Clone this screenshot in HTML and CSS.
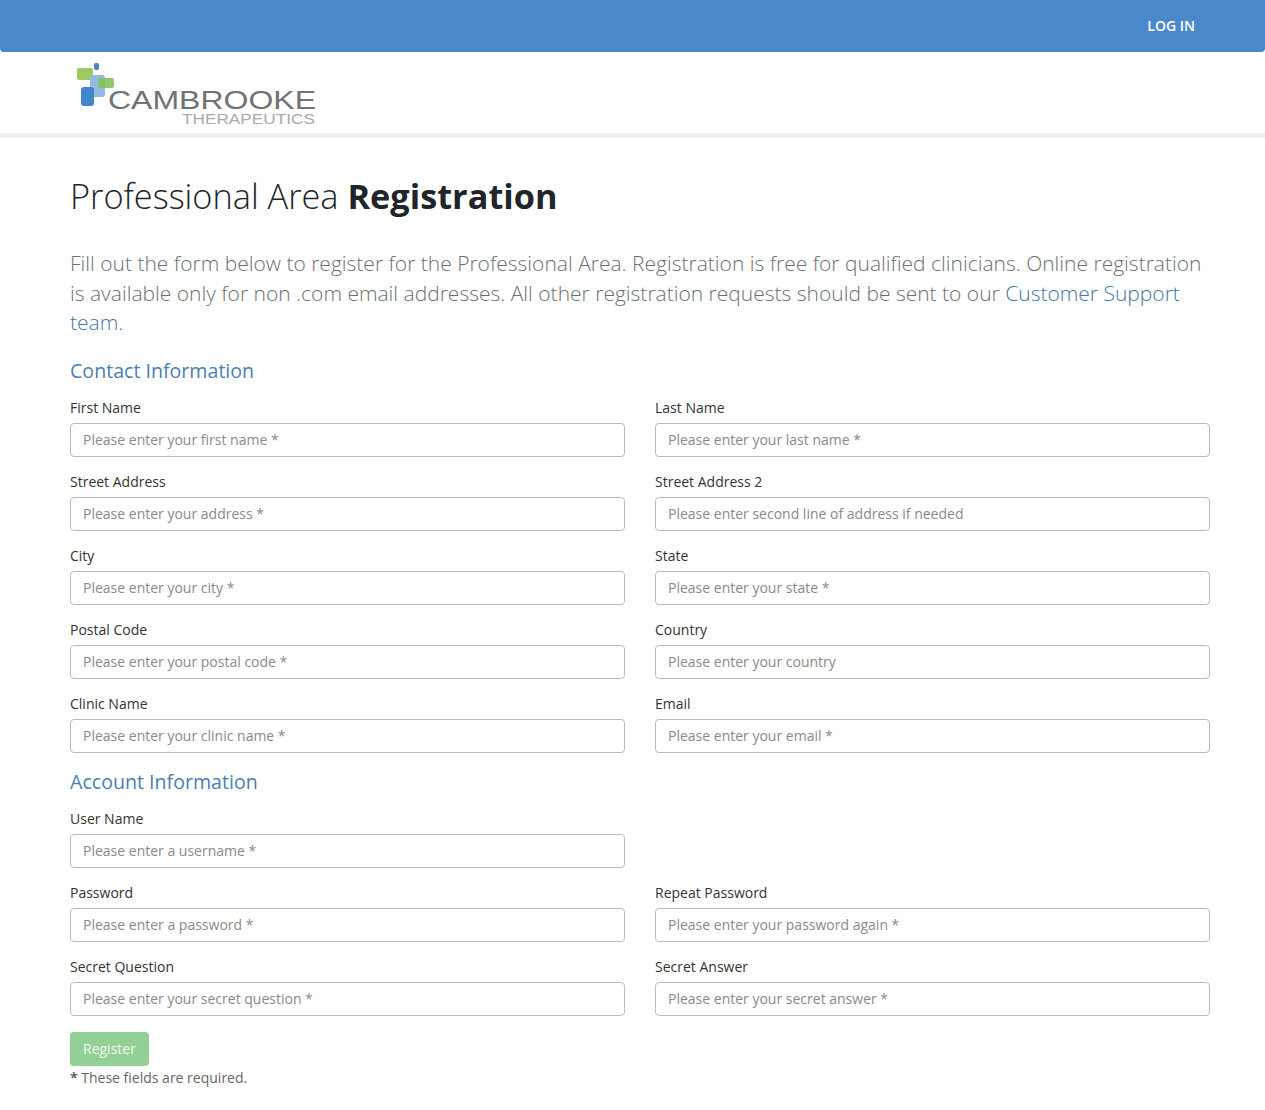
FILE: index.html
```html
<!DOCTYPE html>
<html lang="en">
<head>
    <meta charset="UTF-8">
    <meta name="viewport" content="width=device-width, initial-scale=1.0">
    <title>Professional Area Registration</title>
    <link rel="stylesheet" href="styles.css">
</head>
<body>

<nav class="topbar">
    <a class="topbar__link" href="#">LOG IN</a>
</nav>

<header class="brand">
    <svg class="brand__logo" width="250" height="80" viewBox="0 0 250 80" role="img" aria-label="Cambrooke Therapeutics">
        <rect x="24" y="11" width="5" height="7" rx="2" fill="#4a86c5"/>
        <rect x="7" y="16" width="16" height="12" rx="2" fill="#9ccb5f"/>
        <rect x="20" y="23" width="15" height="22" rx="3" fill="#94b9e3"/>
        <rect x="28" y="26" width="16" height="10" rx="2" fill="#7fc04f" fill-opacity="0.85"/>
        <rect x="11" y="35" width="13" height="19" rx="3" fill="#4485cb"/>
        <text class="brand__name" x="38" y="57" textLength="208" lengthAdjust="spacingAndGlyphs">CAMBROOKE</text>
        <text class="brand__sub" x="112" y="72" textLength="133" lengthAdjust="spacingAndGlyphs">THERAPEUTICS</text>
    </svg>
</header>

<main class="content">
    <h1 class="title">Professional Area <strong>Registration</strong></h1>
    <p class="lead">Fill out the form below to register for the Professional Area. Registration is free for qualified clinicians. Online registration is available only for non .com email addresses. All other registration requests should be sent to our <a href="#">Customer Support team.</a></p>

    <form>
        <h2 class="section-title">Contact Information</h2>
        <div class="form-grid">
            <div class="field">
                <label for="first">First Name</label>
                <input id="first" type="text" placeholder="Please enter your first name *">
            </div>
            <div class="field">
                <label for="last">Last Name</label>
                <input id="last" type="text" placeholder="Please enter your last name *">
            </div>
            <div class="field">
                <label for="addr">Street Address</label>
                <input id="addr" type="text" placeholder="Please enter your address *">
            </div>
            <div class="field">
                <label for="addr2">Street Address 2</label>
                <input id="addr2" type="text" placeholder="Please enter second line of address if needed">
            </div>
            <div class="field">
                <label for="city">City</label>
                <input id="city" type="text" placeholder="Please enter your city *">
            </div>
            <div class="field">
                <label for="state">State</label>
                <input id="state" type="text" placeholder="Please enter your state *">
            </div>
            <div class="field">
                <label for="postal">Postal Code</label>
                <input id="postal" type="text" placeholder="Please enter your postal code *">
            </div>
            <div class="field">
                <label for="country">Country</label>
                <input id="country" type="text" placeholder="Please enter your country">
            </div>
            <div class="field">
                <label for="clinic">Clinic Name</label>
                <input id="clinic" type="text" placeholder="Please enter your clinic name *">
            </div>
            <div class="field">
                <label for="email">Email</label>
                <input id="email" type="text" placeholder="Please enter your email *">
            </div>
        </div>

        <h2 class="section-title">Account Information</h2>
        <div class="form-grid">
            <div class="field">
                <label for="user">User Name</label>
                <input id="user" type="text" placeholder="Please enter a username *">
            </div>
            <div class="field"></div>
            <div class="field">
                <label for="pass">Password</label>
                <input id="pass" type="text" placeholder="Please enter a password *">
            </div>
            <div class="field">
                <label for="pass2">Repeat Password</label>
                <input id="pass2" type="text" placeholder="Please enter your password again *">
            </div>
            <div class="field">
                <label for="question">Secret Question</label>
                <input id="question" type="text" placeholder="Please enter your secret question *">
            </div>
            <div class="field">
                <label for="answer">Secret Answer</label>
                <input id="answer" type="text" placeholder="Please enter your secret answer *">
            </div>
        </div>

        <button class="btn-register" type="button">Register</button>
        <p class="required-note"><strong>*</strong> These fields are required.</p>
    </form>
</main>

</body>
</html>
```

FILE: styles.css
```css
/* General styles */
* {
    box-sizing: border-box;
}
body {
    font-family: 'Open Sans', sans-serif;
    font-size: 14px;
    line-height: 1.5;
    color: #333;
    background: #fff;
    margin: 0;
}

/* Top bar */
.topbar {
    display: flex;
    justify-content: flex-end;
    align-items: center;
    height: 52px;
    padding: 0 70px 2px 0;
    background: #4a89c9;
    border-radius: 0 0 4px 4px;
}
.topbar__link {
    color: #fff;
    font-size: 14px;
    font-weight: 600;
    text-decoration: none;
}

/* Logo strip */
.brand {
    height: 86px;
    padding-left: 70px;
    border-bottom: 5px solid #f0f0f0;
}
.brand__logo {
    display: block;
}
.brand__name {
    font-family: 'Liberation Sans', sans-serif;
    font-size: 25px;
    fill: #707275;
}
.brand__sub {
    font-family: 'Liberation Sans', sans-serif;
    font-size: 15px;
    fill: #a8aaad;
}

/* Page content */
.content {
    padding: 0 55px 0 70px;
}
.title {
    margin: 37px 0 0;
    font-size: 34.3px;
    font-weight: 300;
    line-height: 1.2;
    color: #212529;
}
.title strong {
    font-weight: 700;
}
.lead {
    margin: 33px 0 18px;
    font-size: 21px;
    font-weight: 300;
    line-height: 29.5px;
    color: #6c6f72;
}
.lead a {
    color: #3f76a6;
    text-decoration: none;
}
.section-title {
    margin: 0 0 11px;
    font-size: 19.6px;
    font-weight: 400;
    line-height: 30px;
    color: #4a7fb3;
}

/* Form */
.form-grid {
    display: grid;
    grid-template-columns: 555px 555px;
    column-gap: 30px;
}
.field {
    margin-bottom: 14px;
}
.field label {
    display: block;
    margin-bottom: 5px;
    color: #333;
}
.field input {
    display: block;
    width: 100%;
    height: 34px;
    padding: 6px 12px;
    font-family: inherit;
    font-size: 14px;
    color: #495057;
    background: #fff;
    border: 1px solid #bbb;
    border-radius: 4px;
}
.field input::placeholder {
    color: #8a8a8a;
    opacity: 1;
}
.btn-register {
    display: block;
    height: 34px;
    margin-top: 2px;
    padding: 0 13px;
    font-family: inherit;
    font-size: 14px;
    color: #f0fbf0;
    background: #93d095;
    border: none;
    border-radius: 4px;
}
.required-note {
    margin: 1px 0 0;
    color: #666;
}
```
